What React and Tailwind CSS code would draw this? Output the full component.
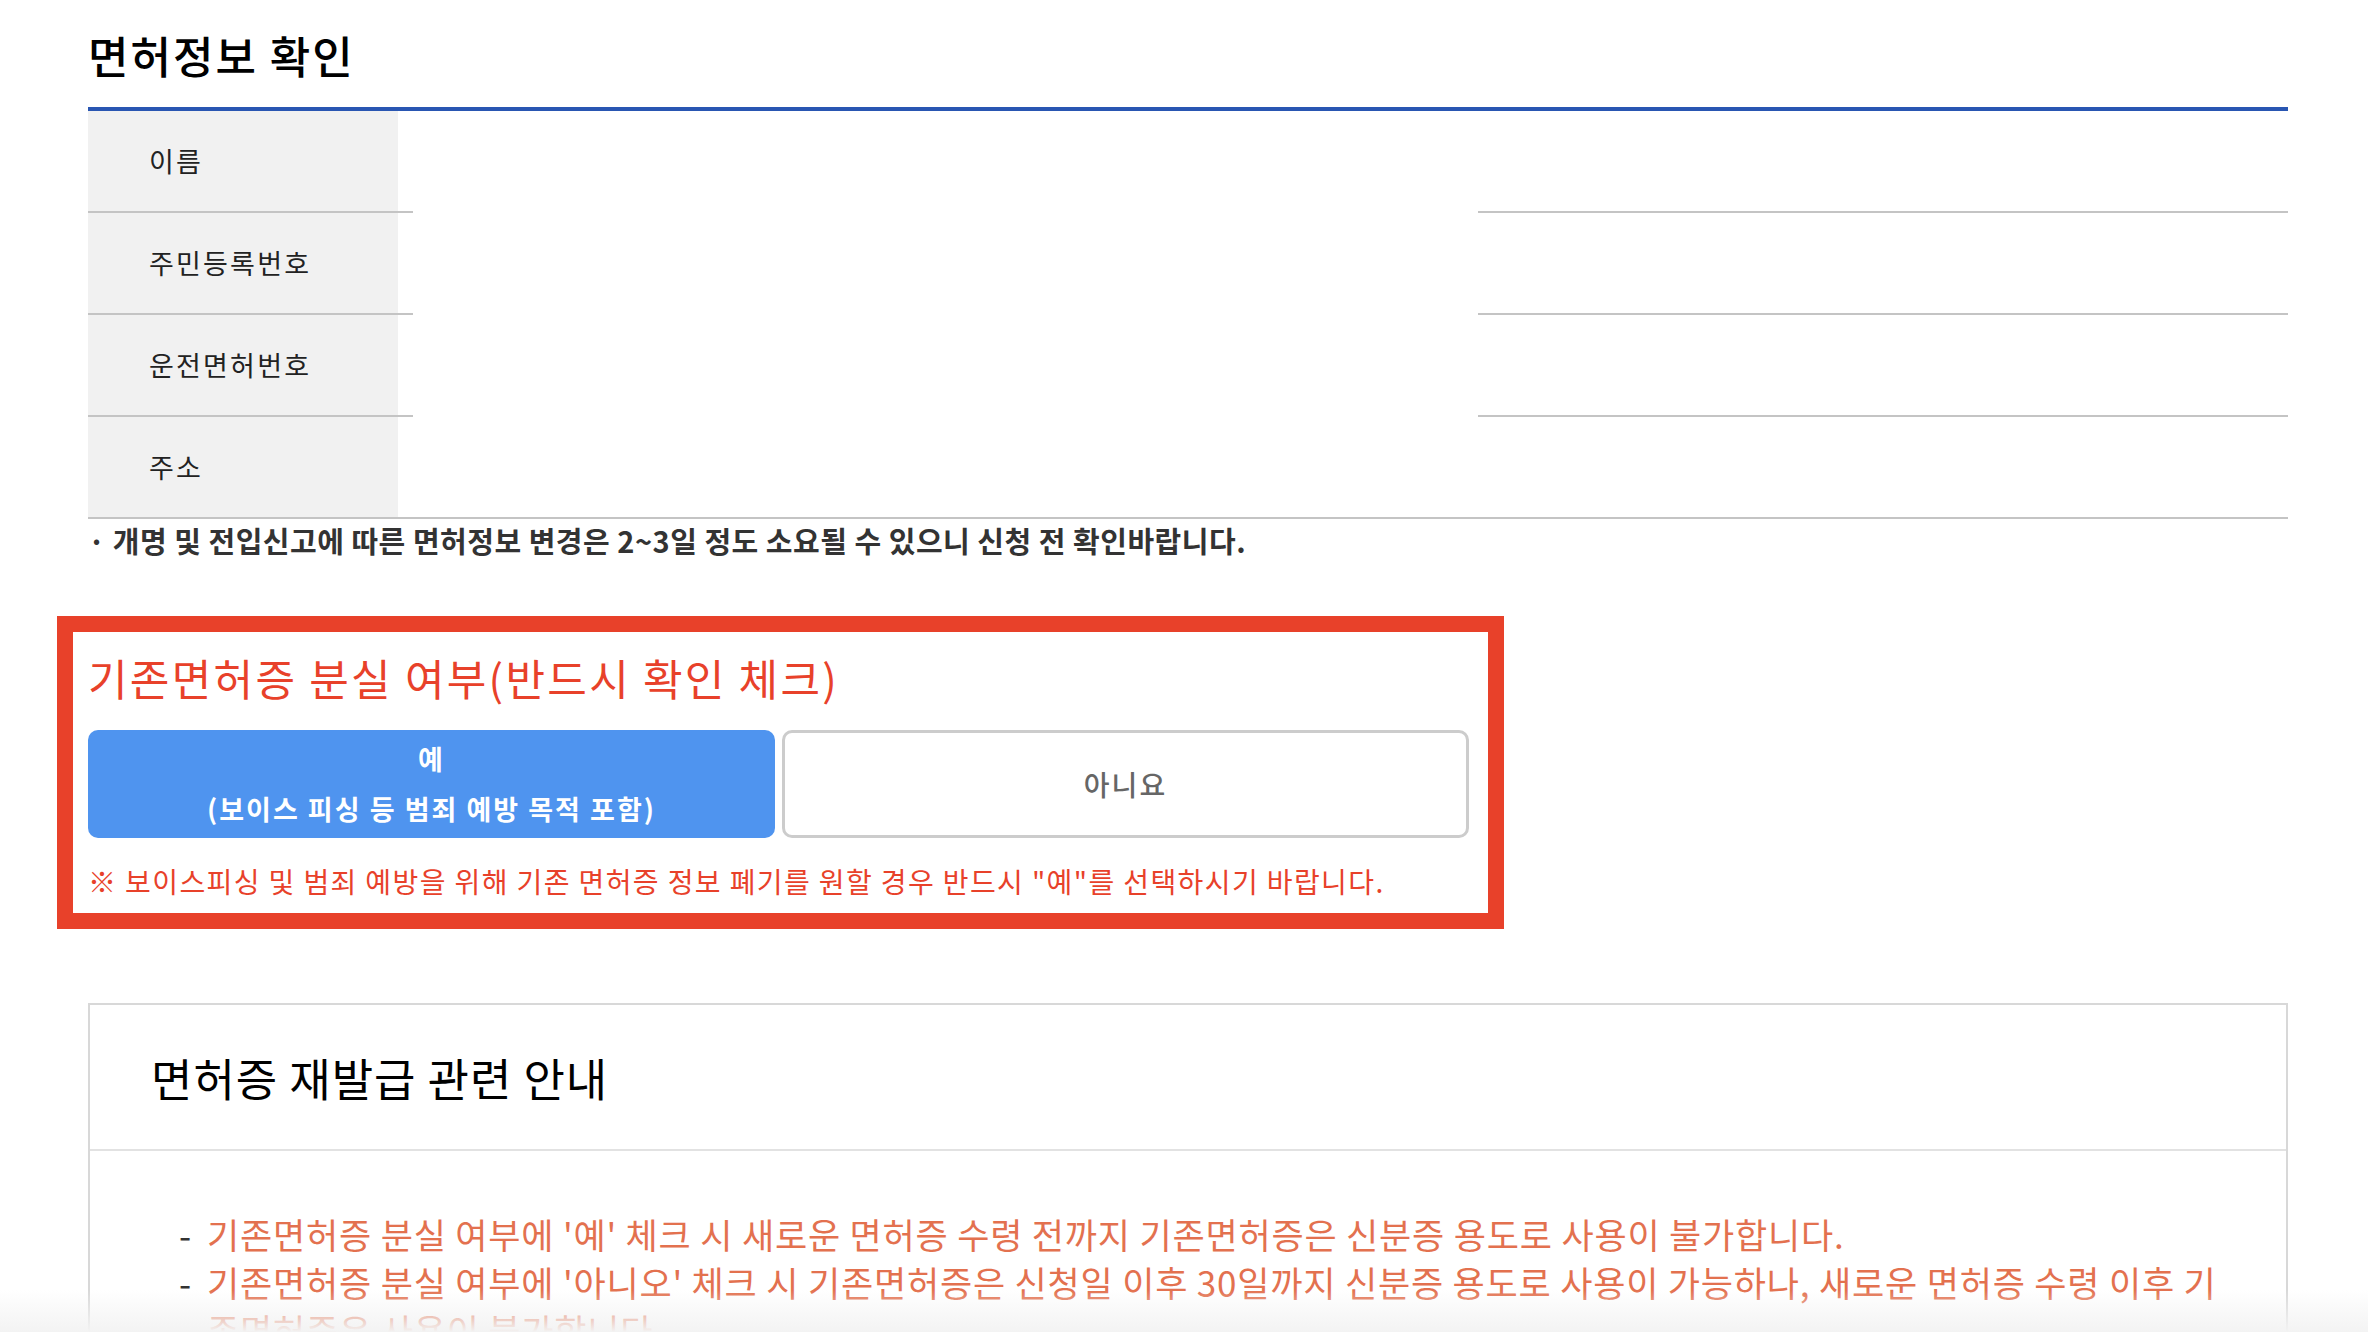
import React from 'react';

const rows = ['이름', '주민등록번호', '운전면허번호', '주소'];

function InfoRow({ label, last }) {
    // last row has a full-width rule, the others only under the label pairs
    if (last) {
        return (
            <div className="flex h-[102px] border-b-2 border-[#c4c4c4]">
                <div className="w-[310px] bg-[#f1f1f1] flex items-center pl-[61px] text-[27px] tracking-[2.2px] text-[#222]">{label}</div>
            </div>
        );
    }
    return (
        <div className="flex h-[102px]">
            <div className="w-[325px] border-b-2 border-[#c4c4c4]">
                <div className="w-[310px] h-full bg-[#f1f1f1] flex items-center pl-[61px] text-[27px] tracking-[2.2px] text-[#222]">{label}</div>
            </div>
            <div className="w-[1065px]" />
            <div className="flex-1 border-b-2 border-[#c4c4c4]" />
        </div>
    );
}

export default function App() {
    return (
        <div className="relative h-[1332px] overflow-hidden bg-white font-['Noto_Sans_CJK_KR','Noto_Sans',sans-serif]">
            <div className="ml-[88px] w-[2200px]">
                <h1 className="pt-[33px] pb-[30px] text-[44px] leading-[44px] tracking-[2px] font-medium text-black">면허정보 확인</h1>
                <div className="border-t-4 border-[#2956b2]">
                    {rows.map((r, i) => (
                        <InfoRow key={r} label={r} last={i === rows.length - 1} />
                    ))}
                </div>
                <p className="mt-px text-[29px] leading-[40px] tracking-[0.5px] font-bold text-[#333]">· 개명 및 전입신고에 따른 면허정보 변경은 2~3일 정도 소요될 수 있으니 신청 전 확인바랍니다.</p>
            </div>

            <div className="ml-[57px] mt-[56px] w-[1447px] border-[16px] border-[#e8412a] pl-[15px] pr-[19px] pt-[24px] pb-[18px]">
                <h2 className="text-[43px] leading-[43px] tracking-[2.3px] text-[#e8412a] whitespace-nowrap">기존면허증 분실 여부(반드시 확인 체크)</h2>
                <div className="mt-[31px] flex gap-[7px]">
                    <button className="w-[687px] h-[108px] rounded-[10px] bg-[#4f94ef] text-white font-bold text-[27px] leading-[50px] tracking-[2px] flex flex-col items-center justify-center">
                        <span>예</span>
                        <span>(보이스 피싱 등 범죄 예방 목적 포함)</span>
                    </button>
                    <button className="w-[687px] h-[108px] rounded-[10px] border-[3px] border-[#cccccc] bg-white text-[#666] text-[28px] tracking-[2px] font-medium flex items-center justify-center">
                        아니요
                    </button>
                </div>
                <p className="mt-[29px] text-[28px] leading-[28px] tracking-[1.4px] text-[#e8412a] whitespace-nowrap">※ 보이스피싱 및 범죄 예방을 위해 기존 면허증 정보 폐기를 원할 경우 반드시 "예"를 선택하시기 바랍니다.</p>
            </div>

            <div className="ml-[88px] mt-[74px] w-[2200px] border-2 border-b-0 border-[#d8d8d8]">
                <div className="h-[146px] flex items-center pl-[61px] border-b-2 border-[#e2e2e2]">
                    <h3 className="text-[45px] leading-[45px] tracking-[1px] text-black">면허증 재발급 관련 안내</h3>
                </div>
                <ul className="pt-[59px] pl-[89px] pr-[40px] text-[35px] leading-[48px] tracking-[0.8px]">
                    <li className="flex">
                        <span className="w-[28px] shrink-0 text-[#333]">-</span>
                        <span className="text-[#e3714f] whitespace-nowrap">기존면허증 분실 여부에 '예' 체크 시 새로운 면허증 수령 전까지 기존면허증은 신분증 용도로 사용이 불가합니다.</span>
                    </li>
                    <li className="flex">
                        <span className="w-[28px] shrink-0 text-[#333]">-</span>
                        <span className="text-[#e3714f] whitespace-nowrap">
                            기존면허증 분실 여부에 '아니오' 체크 시 기존면허증은 신청일 이후 30일까지 신분증 용도로 사용이 가능하나, 새로운 면허증 수령 이후 기<br />
                            존면허증은 사용이 불가합니다.
                        </span>
                    </li>
                </ul>
            </div>

            <div className="pointer-events-none absolute bottom-0 left-0 right-0 h-[42px] bg-linear-to-b from-transparent to-[#f3f3f3]" />
        </div>
    );
}
